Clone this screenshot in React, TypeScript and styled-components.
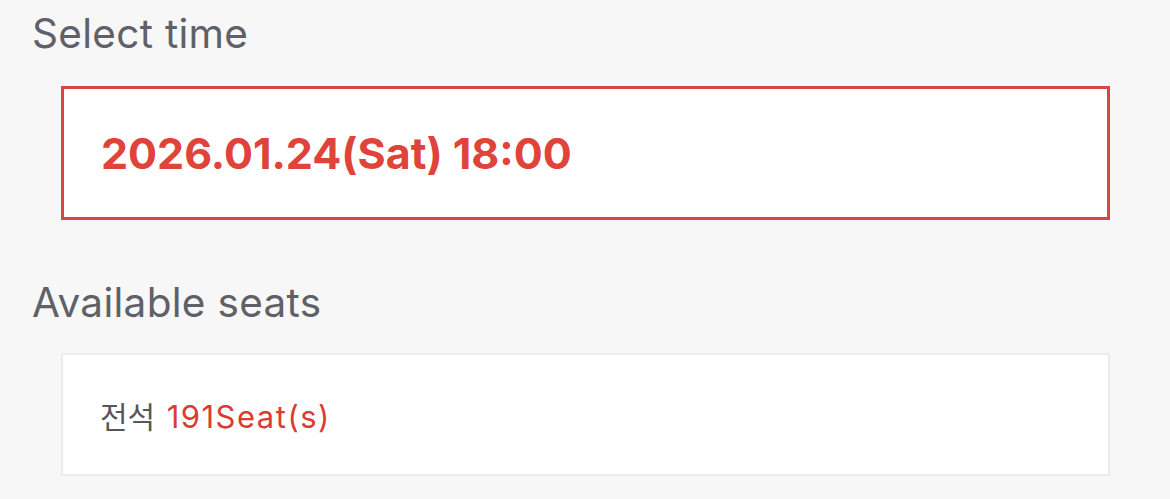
import React from 'react'
import styled, { createGlobalStyle } from 'styled-components'

const GlobalStyle = createGlobalStyle`
    html, body {
        margin: 0;
        padding: 0;
        background: #f7f7f7;
    }
    body {
        font-family: Inter, "Noto Sans CJK KR", "Liberation Sans", sans-serif;
    }
`;

const App = () => {
    return (
        <>
            <GlobalStyle />
            <Page>
                {/* Time */}
                <SectionTitle>Select time</SectionTitle>
                <OptionBox $selected>
                    <DateText>2026.01.24(Sat) 18:00</DateText>
                </OptionBox>

                {/* Seats */}
                <SectionTitle>Available seats</SectionTitle>
                <OptionBox>
                    <SeatText>
                        전석 <Count>191Seat(s)</Count>
                    </SeatText>
                </OptionBox>
            </Page>
        </>
    )
}

export default App

const Page = styled.div`
    display: flex;
    flex-direction: column;
    padding: 12px 60px 0 32px;
`;

const SectionTitle = styled.h2`
    margin: 0;
    font-size: 40.5px;
    font-weight: 400;
    line-height: 44px;
    letter-spacing: 0.3px;
    color: #5f6168;
`;

const OptionBox = styled.div<{ $selected?: boolean }>`
    display: flex;
    align-items: center;
    box-sizing: border-box;
    margin: ${p => (p.$selected ? '30px 0 61px 29px' : '28px 0 0 29px')};
    height: ${p => (p.$selected ? '134px' : '123px')};
    padding-left: 37px;
    background: #ffffff;
    border: ${p => (p.$selected ? '3px solid #d9463f' : '2px solid #ebecf0')};
`;

const DateText = styled.span`
    font-size: 43px;
    font-weight: 700;
    color: #e0433a;
`;

const SeatText = styled.span`
    font-size: 30px;
    color: #55575d;
`;

const Count = styled.span`
    margin-left: 3px;
    font-size: 31px;
    letter-spacing: 1.5px;
    color: #dc3b34;
`;
